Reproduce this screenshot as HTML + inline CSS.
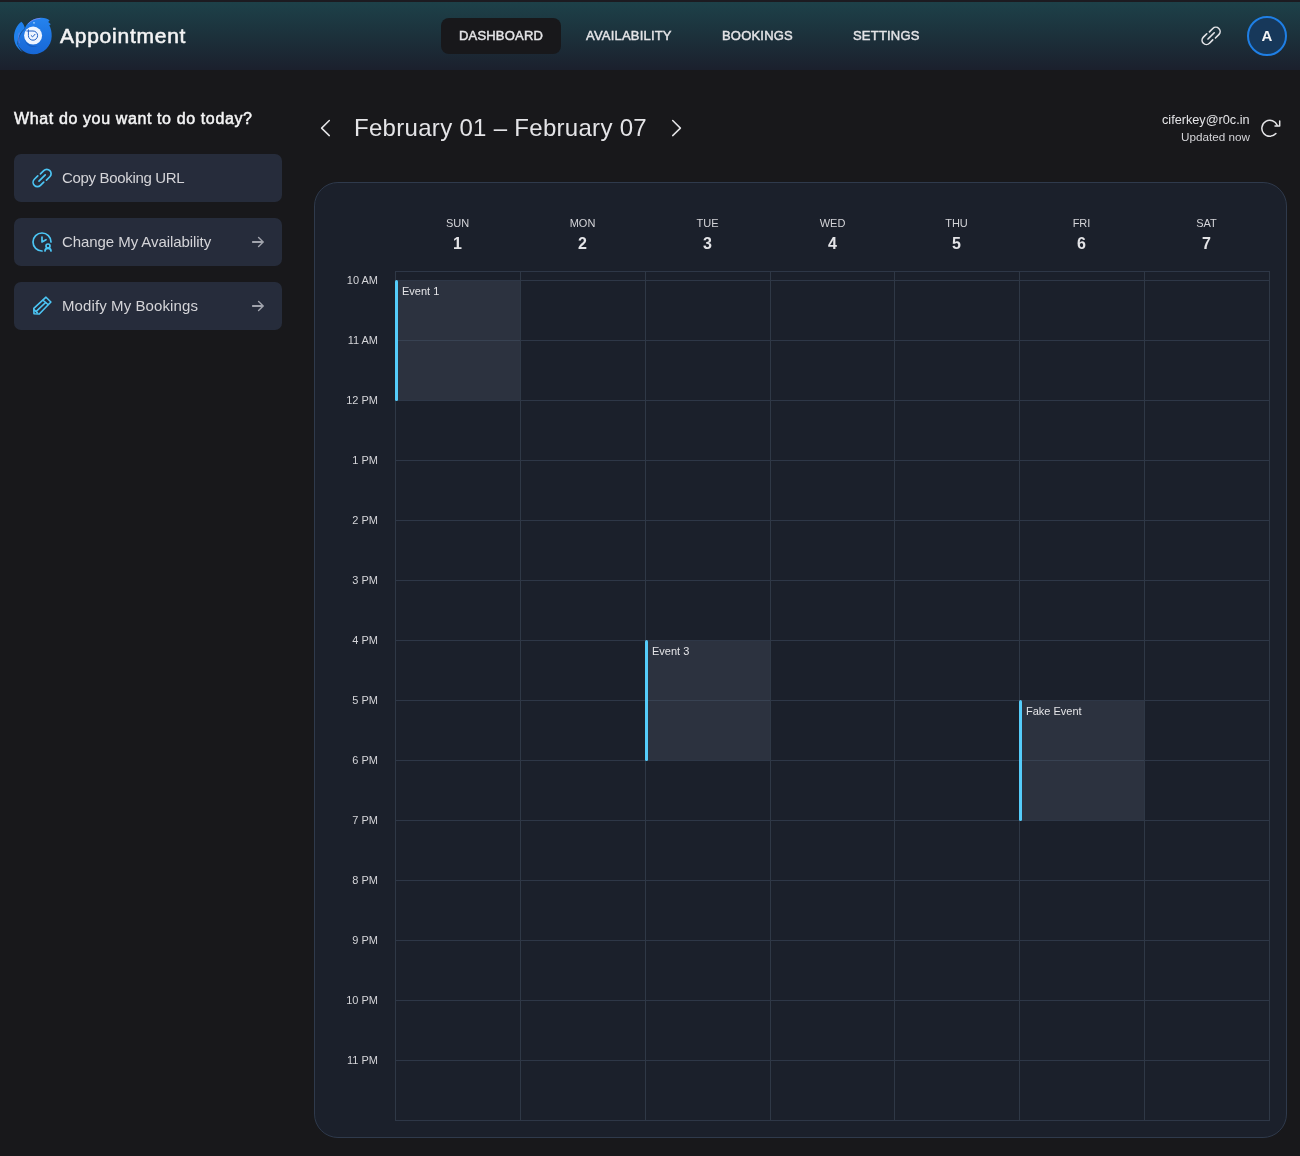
<!DOCTYPE html>
<html><head><meta charset="utf-8">
<style>
*{box-sizing:border-box;margin:0;padding:0}
html,body{width:1300px;height:1156px;overflow:hidden;background:#18181b;font-family:"Liberation Sans",sans-serif;color:#e4e4e7}
.abs{position:absolute;will-change:transform}
#topline{left:0;top:0;width:1300px;height:2px;background:#1c1b21}
#hdr{left:0;top:2px;width:1300px;height:68px;background:linear-gradient(180deg,#1d4149 0%,#1b202d 100%)}
.brand{left:60px;top:24px;font-size:21px;font-weight:normal;-webkit-text-stroke:0.55px #f4f4f5;color:#f4f4f5;white-space:nowrap;letter-spacing:0.75px}
.nav{top:18px;height:36px;font-size:13px;font-weight:normal;-webkit-text-stroke:0.45px #e4e4e7;letter-spacing:0.2px;color:#e4e4e7;line-height:36px;white-space:nowrap}
.pill{left:441px;width:120px;background:#18181b;border-radius:8px;text-align:center}
.avatar{left:1247px;top:16px;width:40px;height:40px;border-radius:50%;border:2px solid #1f7fe5;background:#17385a;color:#f4f4f5;font-size:15px;font-weight:bold;text-align:center;line-height:36px}
.q{left:14px;top:110px;font-size:16px;font-weight:normal;-webkit-text-stroke:0.5px #f4f4f5;letter-spacing:0.62px;color:#f4f4f5;white-space:nowrap}
.btn{left:14px;width:268px;height:48px;border-radius:7px;background:#262c3b}
.btn .t{position:absolute;left:48px;top:0;line-height:48px;font-size:15px;color:#d4d4d8;white-space:nowrap}
.title{left:354px;top:114px;font-size:24px;letter-spacing:0.3px;color:#e4e4e7;white-space:nowrap}
.email{right:50px;top:113px;font-size:12.7px;color:#e4e4e7;white-space:nowrap;text-align:right}
.upd{right:50px;top:130px;font-size:11.7px;color:#d4d4d8;white-space:nowrap;text-align:right}
#card{left:314px;top:182px;width:973px;height:956px;border:1px solid #2f3a4c;border-radius:24px;background:#1b202b}
.dh{top:217px;width:125px;text-align:center;font-size:11px;color:#d4d4d8}
.dn{top:235px;width:125px;text-align:center;font-size:16px;font-weight:bold;color:#e4e4e7}
.tl{width:60px;text-align:right;font-size:11px;color:#d4d4d8;white-space:nowrap}
.ln{background:rgba(75,88,110,0.42)}
.lv{background:#2f3846}
.evbg{background:#2c323f}
.evbar{background:#55ccfa;border-radius:2px}
.evt{font-size:11px;color:#e4e4e7;white-space:nowrap}
</style></head><body>
<div id="topline" class="abs"></div>
<div id="hdr" class="abs"></div>
<div class="abs brand">Appointment</div>
<div class="abs nav pill">DASHBOARD</div>
<div class="abs nav" style="left:586px">AVAILABILITY</div>
<div class="abs nav" style="left:722px">BOOKINGS</div>
<div class="abs nav" style="left:853px">SETTINGS</div>
<div class="abs avatar">A</div>

<div class="abs q">What do you want to do today?</div>
<div class="abs btn" style="top:154px"><span class="t" style="letter-spacing:-0.33px">Copy Booking URL</span></div>
<div class="abs btn" style="top:218px"><span class="t" style="letter-spacing:-0.07px">Change My Availability</span></div>
<div class="abs btn" style="top:282px"><span class="t" style="letter-spacing:0.1px">Modify My Bookings</span></div>

<div class="abs title">February 01 – February 07</div>
<div class="abs email">ciferkey@r0c.in</div>
<div class="abs upd">Updated now</div>

<div id="card" class="abs"></div>
<!--GRID-->
<div class="abs evbg" style="left:396px;top:281px;width:124px;height:119px"></div>
<div class="abs evbg" style="left:646px;top:641px;width:124px;height:119px"></div>
<div class="abs evbg" style="left:1020px;top:701px;width:124px;height:119px"></div>
<div class="abs ln" style="left:395px;top:271px;width:875px;height:1px"></div>
<div class="abs ln" style="left:395px;top:280px;width:875px;height:1px"></div>
<div class="abs ln" style="left:395px;top:340px;width:875px;height:1px"></div>
<div class="abs ln" style="left:395px;top:400px;width:875px;height:1px"></div>
<div class="abs ln" style="left:395px;top:460px;width:875px;height:1px"></div>
<div class="abs ln" style="left:395px;top:520px;width:875px;height:1px"></div>
<div class="abs ln" style="left:395px;top:580px;width:875px;height:1px"></div>
<div class="abs ln" style="left:395px;top:640px;width:875px;height:1px"></div>
<div class="abs ln" style="left:395px;top:700px;width:875px;height:1px"></div>
<div class="abs ln" style="left:395px;top:760px;width:875px;height:1px"></div>
<div class="abs ln" style="left:395px;top:820px;width:875px;height:1px"></div>
<div class="abs ln" style="left:395px;top:880px;width:875px;height:1px"></div>
<div class="abs ln" style="left:395px;top:940px;width:875px;height:1px"></div>
<div class="abs ln" style="left:395px;top:1000px;width:875px;height:1px"></div>
<div class="abs ln" style="left:395px;top:1060px;width:875px;height:1px"></div>
<div class="abs ln" style="left:395px;top:1120px;width:875px;height:1px"></div>
<div class="abs lv" style="left:395px;top:271px;width:1px;height:850px"></div>
<div class="abs lv" style="left:520px;top:271px;width:1px;height:850px"></div>
<div class="abs lv" style="left:645px;top:271px;width:1px;height:850px"></div>
<div class="abs lv" style="left:770px;top:271px;width:1px;height:850px"></div>
<div class="abs lv" style="left:894px;top:271px;width:1px;height:850px"></div>
<div class="abs lv" style="left:1019px;top:271px;width:1px;height:850px"></div>
<div class="abs lv" style="left:1144px;top:271px;width:1px;height:850px"></div>
<div class="abs lv" style="left:1269px;top:271px;width:1px;height:850px"></div>
<div class="abs evbar" style="left:395px;top:280px;width:3px;height:121px"></div>
<div class="abs evt" style="left:402px;top:285px">Event 1</div>
<div class="abs evbar" style="left:645px;top:640px;width:3px;height:121px"></div>
<div class="abs evt" style="left:652px;top:645px">Event 3</div>
<div class="abs evbar" style="left:1019px;top:700px;width:3px;height:121px"></div>
<div class="abs evt" style="left:1026px;top:705px">Fake Event</div>
<div class="abs dh" style="left:394.9px">SUN</div>
<div class="abs dn" style="left:394.9px">1</div>
<div class="abs dh" style="left:519.8px">MON</div>
<div class="abs dn" style="left:519.8px">2</div>
<div class="abs dh" style="left:644.6px">TUE</div>
<div class="abs dn" style="left:644.6px">3</div>
<div class="abs dh" style="left:769.5px">WED</div>
<div class="abs dn" style="left:769.5px">4</div>
<div class="abs dh" style="left:894.4px">THU</div>
<div class="abs dn" style="left:894.4px">5</div>
<div class="abs dh" style="left:1019.2px">FRI</div>
<div class="abs dn" style="left:1019.2px">6</div>
<div class="abs dh" style="left:1144.1px">SAT</div>
<div class="abs dn" style="left:1144.1px">7</div>
<div class="abs tl" style="left:318px;top:274px">10 AM</div>
<div class="abs tl" style="left:318px;top:334px">11 AM</div>
<div class="abs tl" style="left:318px;top:394px">12 PM</div>
<div class="abs tl" style="left:318px;top:454px">1 PM</div>
<div class="abs tl" style="left:318px;top:514px">2 PM</div>
<div class="abs tl" style="left:318px;top:574px">3 PM</div>
<div class="abs tl" style="left:318px;top:634px">4 PM</div>
<div class="abs tl" style="left:318px;top:694px">5 PM</div>
<div class="abs tl" style="left:318px;top:754px">6 PM</div>
<div class="abs tl" style="left:318px;top:814px">7 PM</div>
<div class="abs tl" style="left:318px;top:874px">8 PM</div>
<div class="abs tl" style="left:318px;top:934px">9 PM</div>
<div class="abs tl" style="left:318px;top:994px">10 PM</div>
<div class="abs tl" style="left:318px;top:1054px">11 PM</div>
<!--/GRID-->
<!--ICONS-->
<svg class="abs" style="left:0;top:0" width="1300" height="1156" viewBox="0 0 1300 1156" fill="none" stroke-linecap="round" stroke-linejoin="round">
<!-- logo -->
<g>
<defs><linearGradient id="lg1" x1="0" y1="0" x2="0" y2="1"><stop offset="0" stop-color="#2583ee"/><stop offset="1" stop-color="#1767d6"/></linearGradient></defs>
<path d="M24.9 28.6 C25.5 26.5 26.5 24.8 28 23.3 C31 20 35 18.2 40 17.9 C44.5 17.6 47.5 18.8 49.6 20.4 L48.2 21.9 L50.8 24.3 L49.3 25.3 C51 28.5 51.8 32.5 51.7 36.2 C51.5 46.2 43.4 54.2 33.4 54.2 C26 54.2 20 50 17.5 44 C18 38 20.5 32 24.9 28.6 Z" fill="url(#lg1)"/>
<path d="M21.4 21.7 C23.5 23.5 24.6 26 24.9 28.6 C20.5 32 18 38 17.5 44 C19 48 21 50.5 23 52 C17.5 49.5 14 43.5 14 37 C14 30.5 17 25 21.4 21.7 Z" fill="#2080ec"/>
<path d="M24.9 28.6 C20.5 32 18 38 17.8 44" stroke="#123a70" stroke-width="0.6" opacity="0.7"/>
<path d="M19.2 33 C18.4 36.5 18.4 40 19.2 43" stroke="#8f8cf0" stroke-width="0.7" opacity="0.7"/>
<path d="M28.5 23.5 C31 20.5 35 18.8 40 18.3" stroke="#9a8ef5" stroke-width="0.8" opacity="0.8"/>
<path d="M24.5 38 C25 45 31 48.5 37.5 46.5 C30 47 25.5 43 24.5 38 Z" fill="#1458b8" opacity="0.8"/>
<circle cx="34" cy="22.8" r="0.9" fill="#9fd0ff"/>
<circle cx="33.1" cy="35.6" r="9" fill="#eef5ff"/>
<path d="M28.4 29.8 V35.6 A4.6 4.6 0 1 0 33 31 H26.8" stroke="#1f5fc4" stroke-width="1"/>
<path d="M31.2 35.6 l1.4 1.3 l2.4 -2.6" stroke="#1f5fc4" stroke-width="1"/>
</g>
<!-- header link -->
<g transform="translate(1211.1,35.9) scale(0.95)" stroke="#e4e4e7" stroke-width="1.7"><path d="M-1.75 -4.25L1.75 -7.75A4.5 4.5 0 0 1 8.15 -1.35L4.55 2.25"/><path d="M1.75 4.25L-1.75 7.75A4.5 4.5 0 0 1 -8.15 1.35L-4.55 -2.25"/><path d="M-3.3 3.3L3.3 -3.3"/></g>
<!-- sidebar link -->
<g transform="translate(42.1,178) scale(0.95)" stroke="#4cc6f5" stroke-width="1.75"><path d="M-1.75 -4.25L1.75 -7.75A4.5 4.5 0 0 1 8.15 -1.35L4.55 2.25"/><path d="M1.75 4.25L-1.75 7.75A4.5 4.5 0 0 1 -8.15 1.35L-4.55 -2.25"/><path d="M-3.3 3.3L3.3 -3.3"/></g>
<!-- clock user -->
<g transform="translate(30,230)" stroke="#4cc6f5" stroke-width="1.7"><path d="M21 12a9 9 0 1 0 -9 9"/><path d="M12 7v5l4 -2.3"/><circle cx="18" cy="16" r="2"/><path d="M15 21a3 2.6 0 0 1 6 0"/></g>
<!-- pencil -->
<g transform="translate(30,293)" stroke="#4cc6f5" stroke-width="1.6"><path d="M4 20.7 L3.8 15.4 L16 4.2 L20.9 9 L9.3 21 Z"/><path d="M13.3 7.5 L18 11.5"/><path d="M15.6 9.5 L6.5 18.2"/><path d="M4.3 16.9 L7.4 19.8"/></g>
<!-- arrows -->
<g stroke="#a1a4ad"><path d="M252.8 242h9.5M252.8 306h9.5" stroke-width="1.8"/><path d="M258.6 237.4l4.6 4.6l-4.6 4.6M258.6 301.4l4.6 4.6l-4.6 4.6" stroke-width="1.4"/></g>
<!-- chevrons -->
<g stroke="#e4e4e7" stroke-width="1.5"><path d="M329.3 120.5 L321.6 128.1 L329.3 135.6"/><path d="M672.7 120.5 L680.4 128.1 L672.7 135.6"/></g>
<!-- refresh -->
<g stroke="#e4e4e7" stroke-width="1.5"><path d="M1275.9 133.6 A8 8 0 1 1 1277.3 125.4"/><path d="M1279.7 121 V126.1 H1275"/></g>
</svg>
<!--/ICONS-->
</body></html>
